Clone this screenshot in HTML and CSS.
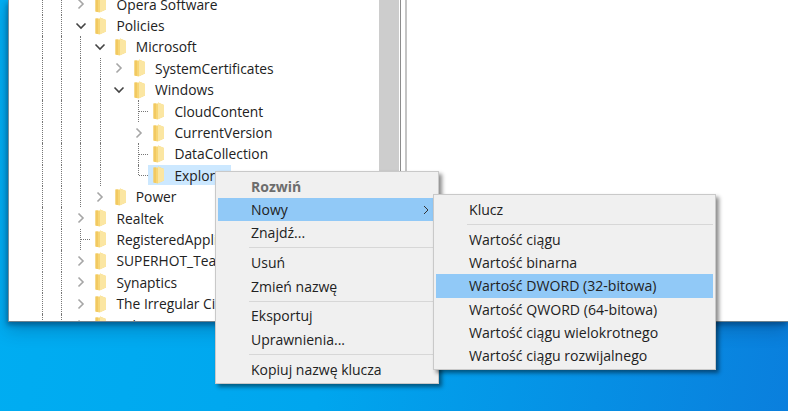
FILE: index.html
```html
<!DOCTYPE html>
<html lang="pl">
<head>
    <meta charset="UTF-8">
    <meta name="viewport" content="width=device-width, initial-scale=1.0">
    <title>Edytor rejestru</title>
    <link rel="stylesheet" href="styles.css">
</head>
<body>
    <svg class="icon-defs" width="0" height="0">
        <symbol id="folder" viewBox="0 0 12 18">
            <path d="M1 1.5 L5.5 1.5 L5.5 0.5 L11.5 3 L11.5 14.5 L5 17.5 L1 16.5 Z" fill="#f7d675"/>
            <path d="M5.5 0.5 L5.5 17.2 L11.5 14.5 L11.5 3 Z" fill="#fbe6a2"/>
            <path d="M1 1.5 L3.5 1.5 L3.5 17 L1 16.5 Z" fill="#f2c961"/>
        </symbol>
        <symbol id="open" viewBox="0 0 12 12"><path d="M1.5 3.5 L6 8 L10.5 3.5" fill="none" stroke="#444" stroke-width="1.6"/></symbol>
        <symbol id="closed" viewBox="0 0 12 12"><path d="M3.5 1.5 L8 6 L3.5 10.5" fill="none" stroke="#a6a6a6" stroke-width="1.6"/></symbol>
    </svg>

    <div class="window">
        <div class="tree">
            <div class="row"><i class="guide"></i><i class="guide"></i><span class="toggle"><svg><use href="#closed"/></svg></span><span class="key"><svg class="folder"><use href="#folder"/></svg><span>Opera Software</span></span></div>
            <div class="row"><i class="guide"></i><i class="guide"></i><span class="toggle"><svg><use href="#open"/></svg></span><span class="key"><svg class="folder"><use href="#folder"/></svg><span>Policies</span></span></div>
            <div class="row"><i class="guide"></i><i class="guide"></i><i class="guide"></i><span class="toggle"><svg><use href="#open"/></svg></span><span class="key"><svg class="folder"><use href="#folder"/></svg><span>Microsoft</span></span></div>
            <div class="row"><i class="guide"></i><i class="guide"></i><i class="guide"></i><i class="guide"></i><span class="toggle"><svg><use href="#closed"/></svg></span><span class="key"><svg class="folder"><use href="#folder"/></svg><span>SystemCertificates</span></span></div>
            <div class="row"><i class="guide"></i><i class="guide"></i><i class="guide"></i><i class="guide"></i><span class="toggle"><svg><use href="#open"/></svg></span><span class="key"><svg class="folder"><use href="#folder"/></svg><span>Windows</span></span></div>
            <div class="row"><i class="guide"></i><i class="guide"></i><i class="guide"></i><i class="guide"></i><i class="blank"></i><span class="toggle tee"></span><span class="key"><svg class="folder"><use href="#folder"/></svg><span>CloudContent</span></span></div>
            <div class="row"><i class="guide"></i><i class="guide"></i><i class="guide"></i><i class="guide"></i><i class="blank"></i><span class="toggle"><svg><use href="#closed"/></svg></span><span class="key"><svg class="folder"><use href="#folder"/></svg><span>CurrentVersion</span></span></div>
            <div class="row"><i class="guide"></i><i class="guide"></i><i class="guide"></i><i class="guide"></i><i class="blank"></i><span class="toggle tee"></span><span class="key"><svg class="folder"><use href="#folder"/></svg><span>DataCollection</span></span></div>
            <div class="row"><i class="guide"></i><i class="guide"></i><i class="guide"></i><i class="guide"></i><i class="blank"></i><span class="toggle elbow"></span><span class="key selected"><svg class="folder"><use href="#folder"/></svg><span>Explorer</span></span></div>
            <div class="row"><i class="guide"></i><i class="guide"></i><i class="guide"></i><span class="toggle"><svg><use href="#closed"/></svg></span><span class="key"><svg class="folder"><use href="#folder"/></svg><span>Power</span></span></div>
            <div class="row"><i class="guide"></i><i class="guide"></i><span class="toggle"><svg><use href="#closed"/></svg></span><span class="key"><svg class="folder"><use href="#folder"/></svg><span>Realtek</span></span></div>
            <div class="row"><i class="guide"></i><i class="guide"></i><span class="toggle tee"></span><span class="key"><svg class="folder"><use href="#folder"/></svg><span>RegisteredApplications</span></span></div>
            <div class="row"><i class="guide"></i><i class="guide"></i><span class="toggle"><svg><use href="#closed"/></svg></span><span class="key"><svg class="folder"><use href="#folder"/></svg><span>SUPERHOT_Team</span></span></div>
            <div class="row"><i class="guide"></i><i class="guide"></i><span class="toggle"><svg><use href="#closed"/></svg></span><span class="key"><svg class="folder"><use href="#folder"/></svg><span>Synaptics</span></span></div>
            <div class="row"><i class="guide"></i><i class="guide"></i><span class="toggle"><svg><use href="#closed"/></svg></span><span class="key"><svg class="folder"><use href="#folder"/></svg><span>The Irregular Circle</span></span></div>
            <div class="row"><i class="guide"></i><i class="guide"></i><span class="toggle"><svg><use href="#closed"/></svg></span><span class="key"><svg class="folder"><use href="#folder"/></svg><span>Valve</span></span></div>
        </div>
        <div class="scrollbar"></div>
        <div class="splitter"></div>
        <div class="values"></div>
    </div>

    <div class="menu context-menu">
        <div class="item title">Rozwiń</div>
        <div class="item active">Nowy<svg class="arrow" viewBox="0 0 6 10"><path d="M1 1 L5 5 L1 9" fill="none" stroke="#333" stroke-width="1"/></svg></div>
        <div class="item">Znajdź...</div>
        <div class="sep"></div>
        <div class="item">Usuń</div>
        <div class="item">Zmień nazwę</div>
        <div class="sep"></div>
        <div class="item">Eksportuj</div>
        <div class="item">Uprawnienia...</div>
        <div class="sep"></div>
        <div class="item">Kopiuj nazwę klucza</div>
    </div>

    <div class="menu sub-menu">
        <div class="item">Klucz</div>
        <div class="sep"></div>
        <div class="item">Wartość ciągu</div>
        <div class="item">Wartość binarna</div>
        <div class="item active">Wartość DWORD (32-bitowa)</div>
        <div class="item">Wartość QWORD (64-bitowa)</div>
        <div class="item">Wartość ciągu wielokrotnego</div>
        <div class="item">Wartość ciągu rozwijalnego</div>
    </div>
</body>
</html>
```

FILE: styles.css
```css
* {
    margin: 0;
    padding: 0;
    box-sizing: border-box;
}

html, body {
    height: 100%;
    overflow: hidden;
}

body {
    font-family: 'Open Sans', 'Noto Sans', sans-serif;
    color: #222;
    background: linear-gradient(100deg, #00aef2 0%, #00a6ee 45%, #0a7fdd 100%);
    padding-left: 8px;
}

.icon-defs {
    display: block;
    height: 0;
}

.window {
    height: 322px;
    display: flex;
    background: white;
    border-left: 1px solid #7d8f99;
    border-bottom: 1px solid #6f828e;
    box-shadow: -1px 3px 5px rgba(0, 40, 80, 0.45), -1px 8px 16px rgba(0, 30, 70, 0.25);
}

.tree {
    width: 370px;
    height: 100%;
    overflow: hidden;
    font-size: 13.8px;
}

.row {
    height: 21.4px;
    display: flex;
    padding-left: 23.6px;
    white-space: nowrap;
}

.row:first-child {
    margin-top: -6.5px;
}

.guide, .blank, .toggle {
    flex: 0 0 19.3px;
    display: flex;
    justify-content: center;
    align-items: center;
}

.guide::before {
    content: '';
    height: 100%;
    border-left: 1px dotted #777;
}

.toggle svg {
    width: 12px;
    height: 12px;
}

.tee, .elbow {
    position: relative;
}

.tee::before, .elbow::before {
    content: '';
    align-self: flex-start;
    height: 100%;
    border-left: 1px dotted #777;
}

.elbow::before {
    height: 50%;
}

.tee::after, .elbow::after {
    content: '';
    position: absolute;
    left: 50%;
    top: 50%;
    width: 9px;
    border-top: 1px dotted #777;
}

.key {
    display: flex;
    align-items: center;
    gap: 9px;
    height: 100%;
    padding-left: 4px;
    padding-right: 20px;
}

.selected {
    background: #cce8ff;
    height: 20px;
    margin-top: 0.5px;
    padding-right: 2px;
}

.folder {
    width: 13px;
    height: 18px;
    flex: none;
}

.scrollbar {
    width: 20px;
    background: #cdcdcd;
}

.splitter {
    width: 8px;
    border-left: 1px solid #fff;
    background: linear-gradient(to right, #8c8c8c 0 1px, #fff 1px 5px, #c4c4c4 5px);
}

.values {
    flex: 1;
}

.menu {
    position: absolute;
    background: #f0f0f0;
    border: 1px solid #c9c9c9;
    padding: 2px;
    font-size: 14px;
    box-shadow: 3px 3px 4px rgba(0, 0, 0, 0.45);
}

.context-menu {
    left: 215px;
    top: 171px;
    width: 224px;
    padding-top: 2.8px;
}

.sub-menu {
    left: 433px;
    top: 194px;
    width: 283px;
    font-size: 14.1px;
    padding-top: 2.8px;
    padding-bottom: 1.2px;
}

.item {
    height: 23.3px;
    line-height: 23.3px;
    padding-left: 33px;
    position: relative;
    white-space: nowrap;
}

.sub-menu .item {
    line-height: 24px;
}

.title {
    font-weight: bold;
    color: #6d6d6d;
}

.active {
    background: #91c9f7;
}

.arrow {
    position: absolute;
    right: 7px;
    top: 7px;
    width: 6px;
    height: 10px;
}

.sep {
    height: 6.6px;
    margin-left: 31px;
    display: flex;
    align-items: center;
}

.sep::before {
    content: '';
    flex: 1;
    border-top: 1px solid #d7d7d7;
}
```
